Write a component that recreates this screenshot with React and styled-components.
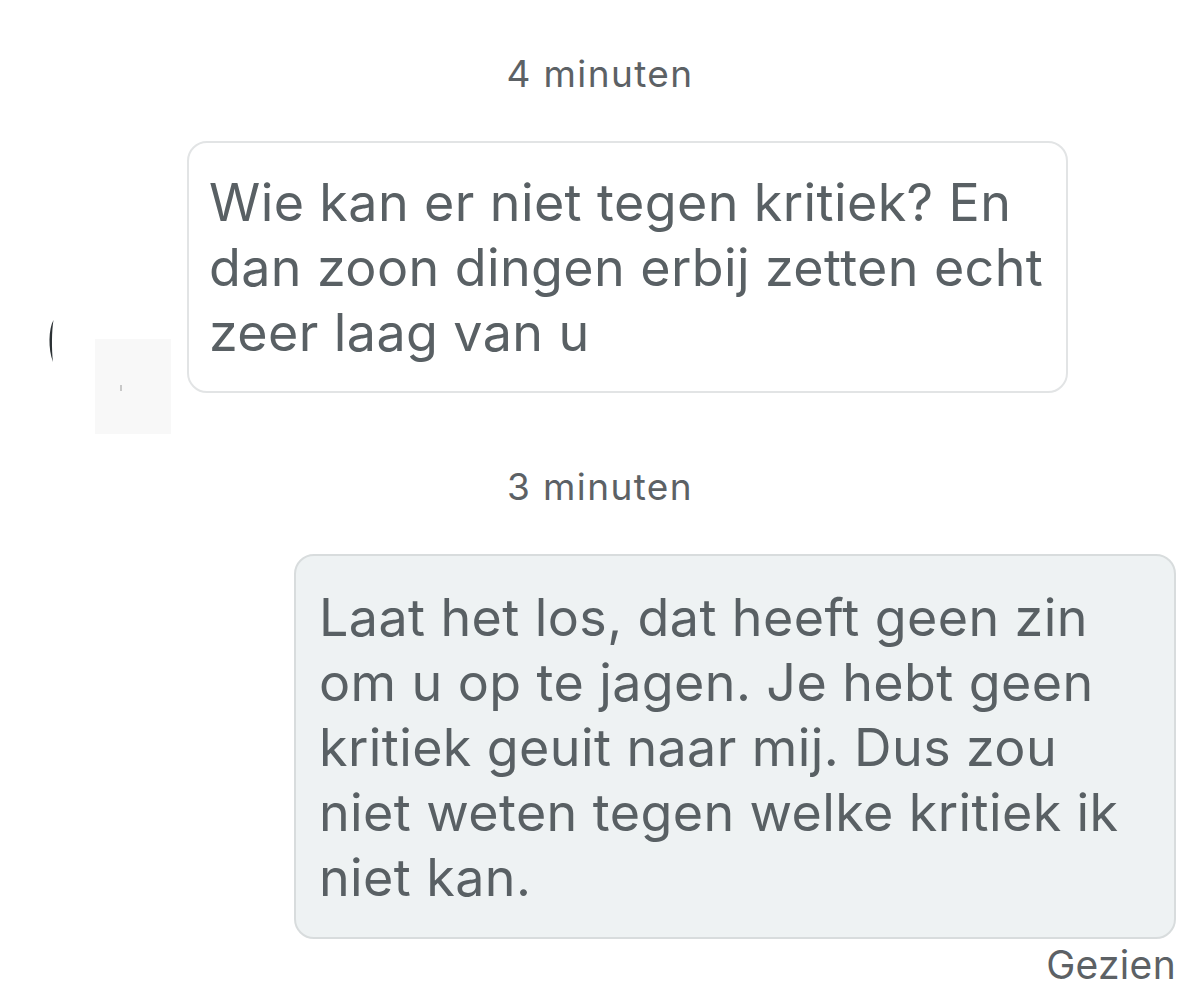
import styled, { createGlobalStyle } from "styled-components";

const GlobalStyle = createGlobalStyle`
    html, body {
        margin: 0;
        padding: 0;
        background: #ffffff;
    }
    body {
        font-family: Inter, "Noto Sans", "Liberation Sans", sans-serif;
        color: #596064;
    }
`

const messages = [
    {
        time: '4 minuten',
        mine: false,
        lines: [
            'Wie kan er niet tegen kritiek? En',
            'dan zoon dingen erbij zetten echt',
            'zeer laag van u',
        ],
    },
    {
        time: '3 minuten',
        mine: true,
        lines: [
            'Laat het los, dat heeft geen zin',
            'om u op te jagen. Je hebt geen',
            'kritiek geuit naar mij. Dus zou',
            'niet weten tegen welke kritiek ik',
            'niet kan.',
        ],
    },
]

function MessageText({ lines }) {
    return lines.map((line, i) => (
        <span key={i}>
            {line}
            {i < lines.length - 1 && <br />}
        </span>
    ))
}

function App() {
    return (
        <>
            <GlobalStyle />
            <Thread>
                {messages.map((msg) => (
                    <Group key={msg.time}>
                        <Timestamp>{msg.time}</Timestamp>
                        {msg.mine ? (
                            <SentRow>
                                <Bubble mine><MessageText lines={msg.lines} /></Bubble>
                                <Seen>Gezien</Seen>
                            </SentRow>
                        ) : (
                            <ReceivedRow>
                                <AvatarSlot>
                                    <svg width="8" height="44" viewBox="0 0 8 44">
                                        <path d="M6.5 1 C1.5 10, 1 30, 6 43 C4.6 30, 4.6 12, 6.5 1 Z" fill="#2b3134" />
                                    </svg>
                                    <Ghost>
                                        <GhostDot />
                                    </Ghost>
                                </AvatarSlot>
                                <Bubble><MessageText lines={msg.lines} /></Bubble>
                            </ReceivedRow>
                        )}
                    </Group>
                ))}
            </Thread>
        </>
    )
}

export default App;

const Thread = styled.div`
    width: 1200px;
    height: 994px;
    overflow: hidden;
    display: flex;
    flex-direction: column;
    box-sizing: border-box;
    padding-top: 51px;
`

const Group = styled.div`
    display: flex;
    flex-direction: column;
`

const Timestamp = styled.div`
    text-align: center;
    font-size: 37px;
    letter-spacing: 1.4px;
    line-height: 46px;
    color: #5c6165;
    margin-bottom: 44px;
`

const ReceivedRow = styled.div`
    display: flex;
    align-items: flex-start;
    margin-bottom: 30px;
`

const AvatarSlot = styled.div`
    width: 187px;
    flex-shrink: 0;
    display: flex;
    align-items: flex-start;
    padding-top: 178px;
    padding-left: 47px;
    box-sizing: border-box;
    gap: 40px;
`

const Ghost = styled.div`
    width: 76px;
    height: 95px;
    margin-top: 20px;
    background: #f8f8f8;
    display: flex;
    align-items: flex-start;
    padding: 46px 0 0 25px;
    box-sizing: border-box;
`

const GhostDot = styled.div`
    width: 2px;
    height: 6px;
    background: #c8c8c8;
`

const SentRow = styled.div`
    display: flex;
    flex-direction: column;
    align-items: flex-end;
    padding-right: 24px;
`

const Bubble = styled.div`
    width: ${({ mine }) => (mine ? '882px' : '881px')};
    box-sizing: border-box;
    padding: ${({ mine }) => (mine ? '29px 18px 27px 23px' : '27px 18px 26px 20px')};
    border-radius: 20px;
    border: 2px solid ${({ mine }) => (mine ? '#d8dcdd' : '#e2e4e5')};
    background: ${({ mine }) => (mine ? '#eef2f3' : '#ffffff')};
    font-size: 52px;
    letter-spacing: 0.4px;
    line-height: 65px;
    color: #596064;
    white-space: nowrap;
`

const Seen = styled.div`
    font-size: 39px;
    letter-spacing: 0.3px;
    line-height: 46px;
    margin-top: 3px;
    color: #5c6165;
`
